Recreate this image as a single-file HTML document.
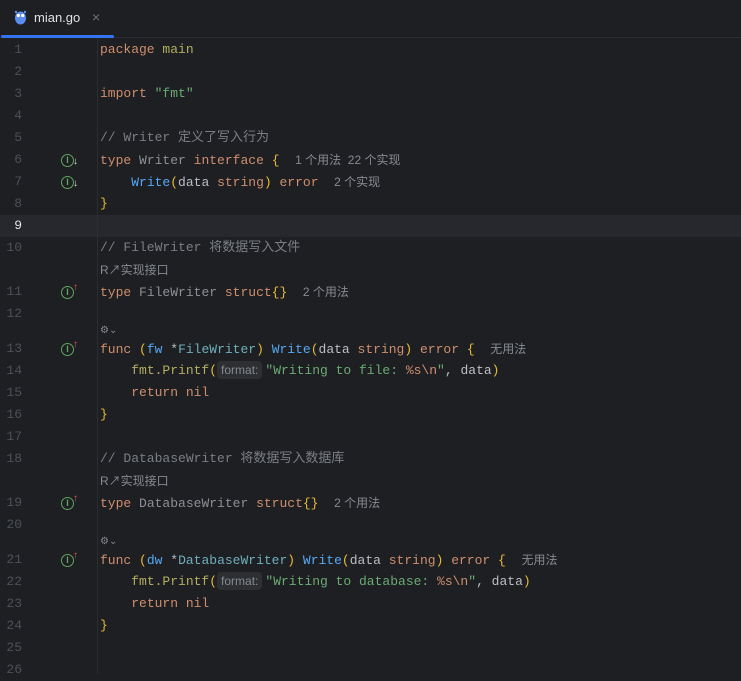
<!DOCTYPE html>
<html><head><meta charset="utf-8"><style>
body{margin:0;width:741px;height:674px;background:#1e1f22;overflow:hidden;position:relative;font-family:"Liberation Mono","Noto Sans CJK SC",monospace;font-size:13px;color:#bcbec4}
.tab{position:absolute;left:0;top:0;width:741px;height:38px;border-bottom:1px solid #2b2d30;box-sizing:border-box}
.tl{position:absolute;left:34px;top:10px;font-family:"Liberation Sans",sans-serif;font-size:13px;color:#dfe1e5}
.x{position:absolute;left:92px;top:9px;color:#6f737a;font-family:"Liberation Sans",sans-serif;font-size:14px}
.ul{position:absolute;left:1px;top:35px;width:113px;height:3px;background:#3574f0;border-radius:2px}
.div{position:absolute;left:97px;top:38px;width:1px;height:636px;background:#2b2d30}
.hl{position:absolute;left:0;top:215px;width:741px;height:22px;background:#26282e}
.r{position:absolute;height:22px;line-height:22px;white-space:pre}
.n{position:absolute;width:22px;text-align:right;color:#4b5059;left:0;height:22px;line-height:22px}
.k{color:#cf8e6d}.s{color:#6aab73}.c{color:#7a7e85}.f{color:#56a8f5}.g{color:#8c8f94}.y{color:#e8ba36}.m{color:#b3ae60}.t{color:#6fafbd}
.h{font-family:"Liberation Sans","Noto Sans CJK SC",sans-serif;font-size:12px;color:#868a91}
.p{display:inline-block;background:#2d2f33;border-radius:4px;font-family:"Liberation Sans",sans-serif;font-size:12px;color:#868a91;line-height:18px;padding:0 4px;margin-right:3px}
.ic{position:absolute;left:61px;width:13px;height:13px;border:1.4px solid #5fa55f;border-radius:50%;box-sizing:border-box;font-size:9px;line-height:10px;text-align:center;color:#5fa55f;font-family:"Liberation Sans",sans-serif;font-weight:bold}
.ar{position:absolute;left:73px;font-size:10px;font-family:"Liberation Sans",sans-serif}
</style></head><body>
<div class="tab"></div>
<svg style="position:absolute;left:14px;top:10px" width="13" height="15" viewBox="0 0 13 15"><ellipse cx="6.5" cy="8" rx="5.5" ry="6.5" fill="#5b8ef0"/><circle cx="4.3" cy="5.5" r="1.6" fill="#fff"/><circle cx="8.7" cy="5.5" r="1.6" fill="#fff"/><circle cx="2" cy="2" r="1.2" fill="#5b8ef0"/><circle cx="11" cy="2" r="1.2" fill="#5b8ef0"/></svg>
<div class="tl">mian.go</div><div class="x">×</div>
<div class="ul"></div>
<div class="hl"></div>
<div class="div"></div>

<div class="n" style="top:39px">1</div><div class="r" style="left:100px;top:39px"><span class="k">package</span> <span class="m">main</span></div>
<div class="n" style="top:61px">2</div>
<div class="n" style="top:83px">3</div><div class="r" style="left:100px;top:83px"><span class="k">import</span> <span class="s">"fmt"</span></div>
<div class="n" style="top:105px">4</div>
<div class="n" style="top:127px">5</div><div class="r c" style="left:100px;top:127px">// Writer 定义了写入行为</div>
<div class="n" style="top:149px">6</div><div class="r" style="left:100px;top:149px"><span class="k">type</span> <span class="g">Writer</span> <span class="k">interface</span> <span class="y">{</span>  <span class="h">1 个用法  22 个实现</span></div>
<div class="n" style="top:171px">7</div><div class="r" style="left:100px;top:171px">    <span class="f">Write</span><span class="y">(</span>data <span class="k">string</span><span class="y">)</span> <span class="k">error</span>  <span class="h">2 个实现</span></div>
<div class="n" style="top:193px">8</div><div class="r y" style="left:100px;top:193px">}</div>
<div class="n" style="top:215px;color:#dfe1e5">9</div>
<div class="n" style="top:237px">10</div><div class="r c" style="left:100px;top:237px">// FileWriter 将数据写入文件</div>
<div class="r h" style="left:100px;top:259px">R↗实现接口</div>
<div class="n" style="top:281px">11</div><div class="r" style="left:100px;top:281px"><span class="k">type</span> <span class="g">FileWriter</span> <span class="k">struct</span><span class="y">{}</span>  <span class="h">2 个用法</span></div>
<div class="n" style="top:303px">12</div>
<div class="r h" style="left:100px;top:320px;font-size:10px">⚙⌄</div>
<div class="n" style="top:338px">13</div><div class="r" style="left:100px;top:338px"><span class="k">func</span> <span class="y">(</span><span class="f">fw</span> *<span class="t">FileWriter</span><span class="y">)</span> <span class="f">Write</span><span class="y">(</span>data <span class="k">string</span><span class="y">)</span> <span class="k">error</span> <span class="y">{</span>  <span class="h">无用法</span></div>
<div class="n" style="top:360px">14</div><div class="r" style="left:100px;top:360px">    <span class="m">fmt.Printf</span><span class="y">(</span><span class="p">format:</span><span class="s">"Writing to file: <span class="k">%s\n</span>"</span>, data<span class="y">)</span></div>
<div class="n" style="top:382px">15</div><div class="r" style="left:100px;top:382px">    <span class="k">return nil</span></div>
<div class="n" style="top:404px">16</div><div class="r y" style="left:100px;top:404px">}</div>
<div class="n" style="top:426px">17</div>
<div class="n" style="top:448px">18</div><div class="r c" style="left:100px;top:448px">// DatabaseWriter 将数据写入数据库</div>
<div class="r h" style="left:100px;top:470px">R↗实现接口</div>
<div class="n" style="top:492px">19</div><div class="r" style="left:100px;top:492px"><span class="k">type</span> <span class="g">DatabaseWriter</span> <span class="k">struct</span><span class="y">{}</span>  <span class="h">2 个用法</span></div>
<div class="n" style="top:514px">20</div>
<div class="r h" style="left:100px;top:531px;font-size:10px">⚙⌄</div>
<div class="n" style="top:549px">21</div><div class="r" style="left:100px;top:549px"><span class="k">func</span> <span class="y">(</span><span class="f">dw</span> *<span class="t">DatabaseWriter</span><span class="y">)</span> <span class="f">Write</span><span class="y">(</span>data <span class="k">string</span><span class="y">)</span> <span class="k">error</span> <span class="y">{</span>  <span class="h">无用法</span></div>
<div class="n" style="top:571px">22</div><div class="r" style="left:100px;top:571px">    <span class="m">fmt.Printf</span><span class="y">(</span><span class="p">format:</span><span class="s">"Writing to database: <span class="k">%s\n</span>"</span>, data<span class="y">)</span></div>
<div class="n" style="top:593px">23</div><div class="r" style="left:100px;top:593px">    <span class="k">return nil</span></div>
<div class="n" style="top:615px">24</div><div class="r y" style="left:100px;top:615px">}</div>
<div class="n" style="top:637px">25</div>
<div class="n" style="top:659px">26</div>

<div class="ic" style="top:154px">I</div><div class="ar" style="top:156px;color:#dfe1e5">↓</div>
<div class="ic" style="top:176px">I</div><div class="ar" style="top:178px;color:#dfe1e5">↓</div>
<div class="ic" style="top:286px">I</div><div class="ar" style="top:282px;color:#e55757">↑</div>
<div class="ic" style="top:343px">I</div><div class="ar" style="top:339px;color:#e55757">↑</div>
<div class="ic" style="top:497px">I</div><div class="ar" style="top:493px;color:#e55757">↑</div>
<div class="ic" style="top:554px">I</div><div class="ar" style="top:550px;color:#e55757">↑</div>
</body></html>
